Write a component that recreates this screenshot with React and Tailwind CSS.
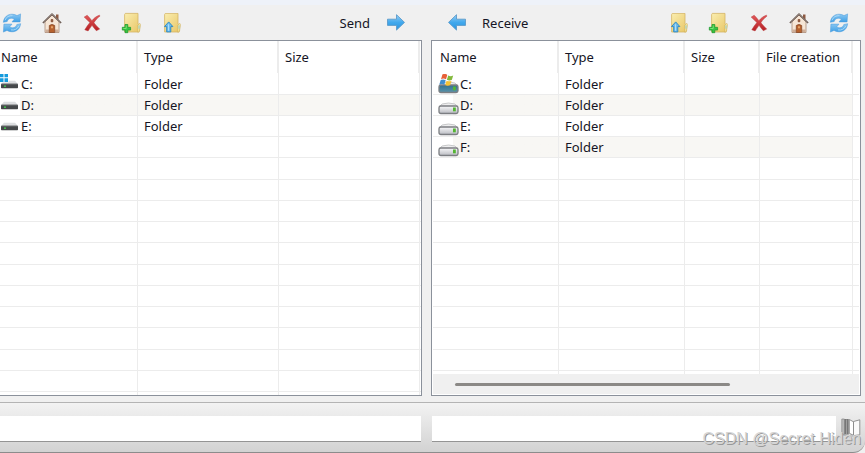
import React from 'react';

function Refresh() {
  return (
    <svg className="size-5" viewBox="0 0 20 20" aria-hidden="true">
      <defs>
        <linearGradient id="refreshBlue" x1="0" y1="0" x2="0" y2="1">
          <stop offset="0" stopColor="#8cc8f2" />
          <stop offset="1" stopColor="#3d9fe6" />
        </linearGradient>
      </defs>
      <g fill="url(#refreshBlue)" stroke="#4a9bda" strokeWidth="0.5" strokeLinejoin="round">
        <path d="M1.300 9.300C2 4 5.500 1.200 10 1.200c2 0 3.700.5 5 1.400L18.600.9l-.5 8H10l2.400-2.900C9.400 4.400 6.200 5.200 5.200 8.500Z" />
        <path d="M18.700 10.700c-.7 5.300-4.200 8.100-8.700 8.100-2 0-3.700-.5-5-1.400l-3.600 1.700.5-8H10l-2.400 2.900c3 1.600 6.200.8 7.200-2.500Z" />
      </g>
      <path d="M3 7.300C4.200 4 7 2.500 10.500 2.600M9 16.900c3.500.6 6.300-.8 7.800-4" stroke="#b9dff8" strokeWidth="0.8" fill="none" />
    </svg>
  );
}

function Home() {
  return (
    <svg className="size-5" viewBox="0 0 20 20" aria-hidden="true">
      <path d="M14 1.500h2.500v5H14Z" fill="#8e5a42" />
      <path d="M3 8.500 10 2l7 6.500V19.500H3Z" fill="#f6e6d6" stroke="#a98a76" strokeWidth="0.8" />
      <path d="M3.400 16.500h3.600v2.600H3.400zM13 16.500h3.600v2.600H13z" fill="#cfae98" />
      <path d="M.9 10 10 1.200l9.100 8.800" fill="none" stroke="#67564e" strokeWidth="1.600" strokeLinejoin="round" />
      <path d="m1.600 9 8.400-8 8.400 8" fill="none" stroke="#aaa09a" strokeWidth="0.6" />
      <path d="M7.300 19.500v-7q2.700-2.200 5.400 0v7Z" fill="#b7622e" stroke="#7f3f1e" strokeWidth="0.7" />
      <path d="M9 13.300h2v2H9z" fill="#e5a36a" />
      <rect x="8.700" y="6" width="2.600" height="3.200" rx="1" fill="#915c42" />
    </svg>
  );
}

function Cross() {
  return (
    <svg className="size-5" viewBox="0 0 20 20" aria-hidden="true">
      <defs>
        <linearGradient id="crossRed" x1="0" y1="0" x2="0" y2="1">
          <stop offset="0" stopColor="#e2595a" />
          <stop offset="1" stopColor="#b51f24" />
        </linearGradient>
      </defs>
      <path
        d="M2.200 4.100 5.200 2.300C6.800 3.900 8.300 5.700 9.900 7.700 11.800 5.300 13.900 3.500 17.300 2.200l.8.7c-2.700 2-4.700 4.200-6.200 6.900 1.800 2.100 3.500 4.200 5.800 6.300l-3.400 1.600c-1.600-1.800-2.900-3.600-4.300-5.400-1.400 1.900-2.700 3.700-3.900 5.600l-3.300-1.100c1.500-2.600 3.200-5 5.100-7.300C6 7.600 4 5.800 2.200 4.100Z"
        fill="url(#crossRed)"
        stroke="#b83a3d"
        strokeWidth="0.5"
      />
    </svg>
  );
}

function FolderBase() {
  return (
    <>
      <defs>
        <linearGradient id="folderYellow" x1="0" y1="0" x2="1" y2="1">
          <stop offset="0" stopColor="#faeeb0" />
          <stop offset="1" stopColor="#e8c565" />
        </linearGradient>
      </defs>
      <path d="M3.300.4h12.700v10.600l1.900 1.300-.7 6.700H2.600V1.500Z" fill="url(#folderYellow)" stroke="#d4b565" strokeWidth="0.8" />
      <path d="m15.800 12 2-1.700.6 1.100-.8 6.500-1.700 1.500Z" fill="#f8e89f" stroke="#c9a64e" strokeWidth="0.5" />
      <path d="M17 12.400v3.300" stroke="#8bcbd7" strokeWidth="0.9" />
    </>
  );
}

function FolderAdd() {
  return (
    <svg className="size-5 overflow-visible" viewBox="0 0 20 20" aria-hidden="true">
      <FolderBase />
      <path d="M3 11.500h2.800v2.800h2.800v2.800H5.800v2.600H3v-2.600H.3v-2.800H3Z" fill="#36c443" stroke="#18942a" strokeWidth="0.7" />
      <path d="M4.200 12.500v3H1.300" stroke="#8aea83" strokeWidth="0.8" fill="none" />
    </svg>
  );
}

function FolderUp() {
  return (
    <svg className="size-5" viewBox="0 0 20 20" aria-hidden="true">
      <FolderBase />
      <path d="m6.700 8.900 4.200 4.700H8.800v5.300H4.700v-5.300H2.500Z" fill="#6ebbec" stroke="#2786c4" strokeWidth="0.9" />
      <path d="M6.500 11.300v6.400" stroke="#b6e4fb" strokeWidth="0.9" />
    </svg>
  );
}

function Arrow({ left = false }) {
  return (
    <svg className={left ? 'size-5 -scale-x-100' : 'size-5'} viewBox="0 0 20 20" aria-hidden="true">
      <defs>
        <linearGradient id="arrowBlue" x1="0" y1="0" x2="0" y2="1">
          <stop offset="0" stopColor="#95cdf4" />
          <stop offset="0.5" stopColor="#42a9ed" />
          <stop offset="1" stopColor="#2793df" />
        </linearGradient>
      </defs>
      <path d="M1.500 6.200h9V1.700l8 7.700-8 7.700v-4.700h-9Z" fill="url(#arrowBlue)" stroke="#5c9bcb" strokeWidth="0.9" strokeLinejoin="round" />
    </svg>
  );
}

function LocalDrive({ system = false }) {
  return (
    <svg className="h-5 w-[21px] shrink-0" viewBox="0 0 21 20" aria-hidden="true">
      <path d="M4 6.700h11l3 3.300H1Z" fill="#dcdee0" />
      <rect x="1" y="9.700" width="17" height="4.600" rx="0.700" fill="#45484a" />
      <path d="M1.500 10.200h16" stroke="#6b6e70" strokeWidth="0.8" />
      <circle cx="5" cy="12.200" r="0.900" fill="#3ed94c" />
      {system && (
        <>
          <path d="M-.5-1h9v9.300h-9z" fill="#fff" />
          <path d="M0-.5h3.500v3.800H0zM4.500-.5H8v3.800H4.500zM0 4.200h3.500V8H0zM4.500 4.200H8V8H4.500z" fill="#159bdd" />
        </>
      )}
    </svg>
  );
}

function RemoteDrive({ system = false }) {
  return (
    <svg className="h-5 w-[22px] shrink-0" viewBox="0 0 22 20" aria-hidden="true">
      <defs>
        <linearGradient id="driveSilver" x1="0" y1="0" x2="0" y2="1">
          <stop offset="0" stopColor="#f8f8fa" />
          <stop offset="1" stopColor="#b9bbc1" />
        </linearGradient>
        <linearGradient id="driveBlue" x1="0" y1="0" x2="0" y2="1">
          <stop offset="0" stopColor="#32718e" />
          <stop offset="1" stopColor="#5993ab" />
        </linearGradient>
      </defs>
      <path d="M4 9Q10.500 7 17 9l3 3H1Z" fill="#eeeeef" stroke="#bbbcbe" strokeWidth="0.8" />
      <rect x="1" y="11" width="19" height="7.500" rx="1.800" fill={system ? 'url(#driveBlue)' : 'url(#driveSilver)'} stroke="#7c7e82" strokeWidth="1.300" />
      <rect x="15" y="12.500" width="2.800" height="3.800" fill="#54b632" />
      {system && (
        <>
          <path d="M4.500.3Q7.300-.8 9.300 1L8 5.300Q5.500 3.800 3 5.200Z" fill="#e76038" />
          <path d="M10.200 1.500q2.500 1.400 5 0l-1.300 4.200q-2.400 1.400-5 0Z" fill="#83b93c" />
          <path d="M2.700 6q2.500-1.300 5 .2l-1.400 4.500q-2.500-1.500-5-.1Z" fill="#408ece" />
          <path d="M8.600 6.700q2.500 1.300 5 0l-1.400 4.400q-2.500 1.300-5 0Z" fill="#f6c334" />
        </>
      )}
    </svg>
  );
}

function Book() {
  return (
    <svg className="h-5 w-5" viewBox="0 0 20 20" aria-hidden="true">
      <path d="M.8 1h2.600v15.500H.8z" fill="#bbb" stroke="#888" strokeWidth="0.700" />
      <path d="M3.400 1h4.300v15.500H3.400z" fill="#777" />
      <path d="M5.500 1.500v14.500" stroke="#aaa" strokeWidth="0.800" />
      <path d="m8.300 1.500 4.200 2.300v13.500l-4.200-2Z" fill="#fff" stroke="#888" strokeWidth="0.900" />
      <path d="m12.500 3.500 6.300-1.700v15l-6.300.8Z" fill="#fafafa" stroke="#888" strokeWidth="0.900" />
      <path d="M1 16.800 8 18h10" fill="none" stroke="#aaa" />
    </svg>
  );
}

function Tool({ label, children }) {
  return (
    <button type="button" aria-label={label} className="size-5">
      {children}
    </button>
  );
}

function FileTable({ label, columns, drives, rowCount, first, Icon }) {
  const rows = Array.from({ length: rowCount }, (_, i) => drives[i]);
  return (
    <table aria-label={label} className="w-full table-fixed border-separate border-spacing-0 text-left">
      <colgroup>
        {columns.map((c) => (
          <col key={c.name} className={c.width} />
        ))}
        <col />
      </colgroup>
      <thead>
        <tr className="h-8">
          {columns.map((c, i) => (
            <th key={c.name} scope="col" className={`border-r-2 border-[#ececec] py-0 pr-0 font-normal whitespace-nowrap ${i === 0 ? first : 'pl-1.5'}`}>
              {c.name}
            </th>
          ))}
          <td className="p-0" />
        </tr>
      </thead>
      <tbody>
        {rows.map((drive, r) => (
          <tr key={r} className="h-[21px] nth-[4n+1]:h-[22px]">
            {columns.map((c, i) => (
              <td
                key={c.name}
                className={`border-r border-b border-r-[#ececec] border-b-[#ececec] p-0 ${drive && r % 2 ? (i === 0 ? 'bg-linear-to-r from-white from-[20px] to-[#f8f7f4] to-[20px]' : 'bg-[#f8f7f4]') : ''}`}
              >
                {drive && i === 0 && (
                  <div className={`flex h-5 items-center ${first === 'pl-px' ? '' : 'pl-[5px]'}`}>
                    <Icon system={r === 0} />
                    <span>{drive}</span>
                  </div>
                )}
                {drive && i === 1 && <div className="pl-1.5 leading-5">Folder</div>}
              </td>
            ))}
            <td className="border-b border-[#ececec] p-0" />
          </tr>
        ))}
      </tbody>
      <tfoot aria-hidden="true">
        <tr className="h-[3px]">
          {columns.map((c) => (
            <td key={c.name} className="border-r border-[#ececec] p-0" />
          ))}
          <td className="p-0" />
        </tr>
      </tfoot>
    </table>
  );
}

const localColumns = [
  { name: 'Name', width: 'w-[138px]' },
  { name: 'Type', width: 'w-[141px]' },
  { name: 'Size', width: 'w-[141px]' },
];

const remoteColumns = [
  { name: 'Name', width: 'w-[126px]' },
  { name: 'Type', width: 'w-[126px]' },
  { name: 'Size', width: 'w-[75px]' },
  { name: 'File creation', width: 'w-[93px]' },
];

export default function App() {
  return (
    <main className="relative min-h-screen bg-[#f0f0f0] font-['Noto_Sans','Open_Sans',sans-serif] text-[13px] leading-5 text-[#151525]">
      <div className="h-[5px] bg-[#eef2f9]" />
      <div className="grid grid-cols-[422fr_430fr] gap-x-[9px] pr-1">
        <div role="toolbar" aria-label="Local files" className="flex h-[35px] items-center gap-5 pr-4 pl-0.5">
          <Tool label="Refresh local"><Refresh /></Tool>
          <Tool label="Local home"><Home /></Tool>
          <Tool label="Delete local"><Cross /></Tool>
          <Tool label="New local folder"><FolderAdd /></Tool>
          <Tool label="Local parent folder"><FolderUp /></Tool>
          <button type="button" className="ml-auto flex items-center gap-4">
            Send
            <Arrow />
          </button>
        </div>
        <div role="toolbar" aria-label="Remote files" className="flex h-[35px] items-center gap-5 pr-3 pl-4">
          <button type="button" className="mr-auto flex items-center gap-[15px]">
            <Arrow left />
            Receive
          </button>
          <Tool label="Remote parent folder"><FolderUp /></Tool>
          <Tool label="New remote folder"><FolderAdd /></Tool>
          <Tool label="Delete remote"><Cross /></Tool>
          <Tool label="Remote home"><Home /></Tool>
          <Tool label="Refresh remote"><Refresh /></Tool>
        </div>

        <section className="border-y border-r border-[#8b919b] bg-white">
          <FileTable label="Local drives" columns={localColumns} drives={['C:', 'D:', 'E:']} rowCount={15} first="pl-px" Icon={LocalDrive} />
        </section>
        <section className="flex flex-col border border-[#8b919b] bg-white px-px pb-px">
          <FileTable label="Remote drives" columns={remoteColumns} drives={['C:', 'D:', 'E:', 'F:']} rowCount={14} first="pl-[7px]" Icon={RemoteDrive} />
          <div className="mt-auto flex h-5 items-center bg-[#f0f0f0] pl-[22px]">
            <div className="h-[3px] w-[68%] rounded-full bg-[#8b8986]" />
          </div>
        </section>
      </div>

      <footer className="mt-[6px] rounded-br-xl border-t border-b border-t-[#b4b4b4] border-b-[#8c8c8c] bg-linear-to-b from-[#f3f3f3] to-[#d2d2d2] pt-[13px] pb-2.5">
        <div className="flex items-start">
          <div className="grid flex-1 grid-cols-[421fr_404fr] gap-x-[11px]">
            <input aria-label="Local path" className="h-[26px] w-full min-w-0 border-b border-[#949494] bg-white px-1 outline-none" />
            <input aria-label="Remote path" className="h-[26px] w-full min-w-0 border-b border-[#949494] bg-white px-1 outline-none" />
          </div>
          <button type="button" aria-label="Address book" className="mt-0.5 mr-1 ml-[5px]">
            <Book />
          </button>
        </div>
      </footer>
      <span className="pointer-events-none absolute right-1 bottom-1 font-['Liberation_Sans',sans-serif] text-[16px] leading-5 text-[#d5d5d5] [text-shadow:1px_1px_0_#999]">
        CSDN @Secret Hiden
      </span>
    </main>
  );
}
